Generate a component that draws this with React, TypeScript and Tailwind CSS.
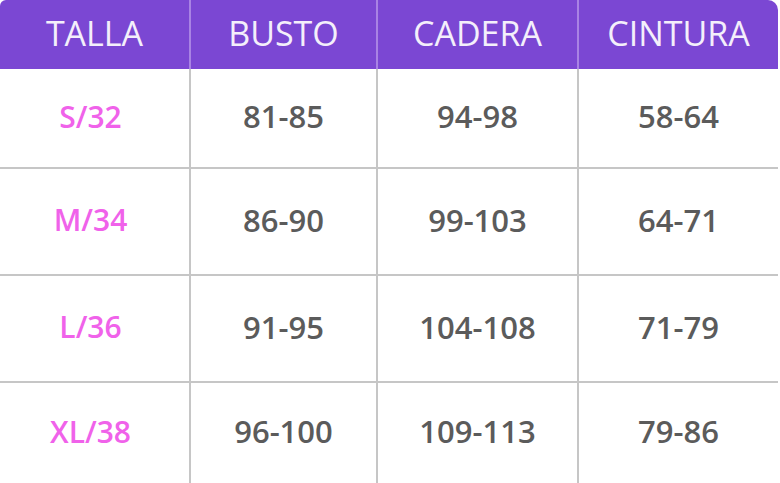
import React from 'react';

const headers = ['TALLA', 'BUSTO', 'CADERA', 'CINTURA'];

const rows = [
  { size: 'S/32', values: ['81-85', '94-98', '58-64'], h: 'h-[98px]' },
  { size: 'M/34', values: ['86-90', '99-103', '64-71'], h: 'h-[107px]' },
  { size: 'L/36', values: ['91-95', '104-108', '71-79'], h: 'h-[107px]' },
  { size: 'XL/38', values: ['96-100', '109-113', '79-86'], h: 'h-[102px]' },
];

const cols = 'grid grid-cols-[189px_187px_201px_201px]';

const App: React.FC = () => {
  return (
    <div className="w-[780px] h-[483px] bg-white overflow-hidden" style={{ fontFamily: '"Open Sans", "Noto Sans", sans-serif' }}>
      <div className="w-[778px] rounded-tl-[6px] rounded-tr-[10px] rounded-br-[10px] overflow-hidden">
        {/* Header */}
        <div className={`${cols} h-[69px] bg-[#7b47d3]`}>
          {headers.map((h, i) => (
            <div
              key={h}
              className={`flex items-center justify-center text-[34px] text-[#f4effb] pb-[3px] ${i > 0 ? 'border-l-2 border-[#a983e4]' : ''}`}
            >
              {h}
            </div>
          ))}
        </div>

        {/* Body */}
        {rows.map((row, r) => (
          <div key={row.size} className={`${cols} ${row.h} ${r > 0 ? 'border-t-2 border-[#c6c6c6]' : ''}`}>
            <div className="flex items-center justify-center text-[30px] font-semibold text-[#f062ea] pr-[8px] pb-[4px]">
              {row.size}
            </div>
            {row.values.map((v) => (
              <div
                key={v}
                className="flex items-center justify-center border-l-2 border-[#c6c6c6] text-[31px] font-semibold text-[#5b5b5b] pb-[3px]"
              >
                {v}
              </div>
            ))}
          </div>
        ))}
      </div>
    </div>
  );
};

export default App;
